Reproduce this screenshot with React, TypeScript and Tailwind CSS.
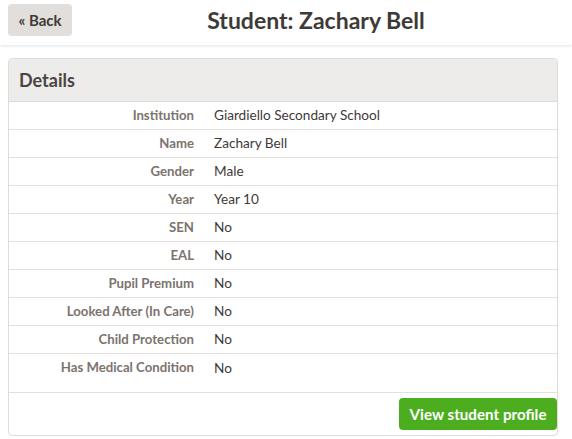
const ROWS: [string, string][] = [
  ["Institution", "Giardiello Secondary School"],
  ["Name", "Zachary Bell"],
  ["Gender", "Male"],
  ["Year", "Year 10"],
  ["SEN", "No"],
  ["EAL", "No"],
  ["Pupil Premium", "No"],
  ["Looked After (In Care)", "No"],
  ["Child Protection", "No"],
  ["Has Medical Condition", "No"],
];

export default function App() {
  return (
    <div className="min-h-[439px] bg-white text-[#3e3a38] font-['Lato','Noto_Sans',sans-serif]">
      <header className="relative flex h-[45px] items-start justify-center bg-white shadow-[0_1px_3px_rgba(0,0,0,0.12)]">
        <button className="absolute left-2 top-1 h-8 w-16 rounded bg-[#e2dedb] text-[15px] font-bold text-[#3e3a38]">
          « Back
        </button>
        <h1 className="ml-[60px] pt-[6px] text-[23px] font-bold leading-7">Student: Zachary Bell</h1>
      </header>

      <div className="mx-2 mt-[13px] w-[550px] overflow-hidden rounded border border-[#dedbd8]">
        <div className="flex h-[43px] items-center border-b border-[#dedbd8] bg-[#eeecea] px-[10px]">
          <h2 className="text-[18px] font-bold text-[#4a4542]">Details</h2>
        </div>
        <div className="pb-[10px]">
          {ROWS.map(([label, value], i) => (
            <div
              key={label}
              className={`flex h-7 items-center ${i < ROWS.length - 1 ? "border-b border-[#e3e0dd]" : ""}`}
            >
              <div className="w-[185px] text-right text-[13.2px] font-bold text-[#7b736e]">{label}</div>
              <div className="pl-[20px] text-[13.6px] text-[#3e3a38]">{value}</div>
            </div>
          ))}
        </div>
        <div className="flex h-[43px] items-center justify-end border-t border-[#e3e0dd] pr-0">
          <button className="h-8 w-[158px] rounded bg-[#4cae1f] text-[15.2px] font-bold text-white">
            View student profile
          </button>
        </div>
      </div>
    </div>
  );
}
